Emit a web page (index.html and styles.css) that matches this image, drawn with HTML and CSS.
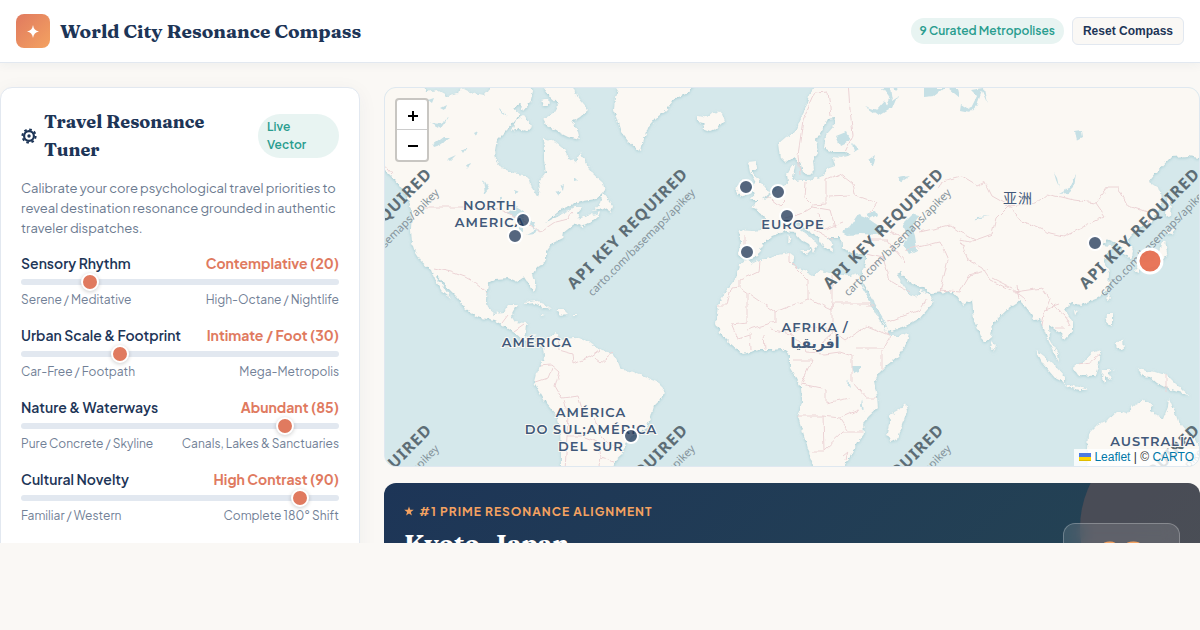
FILE: index.html
```html
<!DOCTYPE html>
<html lang="en">
<head>
<meta charset="utf-8">
<title>World City Resonance Compass</title>
<link rel="stylesheet" href="styles.css">
</head>
<body>
<div class="app">
  <header class="topbar">
    <div class="brand">
      <span class="logo"><svg viewBox="0 0 34 34" aria-hidden="true"><path d="M17 11Q17.8 16.700 23 17.500Q17.800 18.300 17 24Q16.200 18.300 11 17.500Q16.200 16.700 17 11Z" fill="#fff"/></svg></span>
      <h1 class="brand-name">World City Resonance Compass</h1>
    </div>
    <div class="actions">
      <span class="pill">9 Curated Metropolises</span>
      <button class="reset" type="button">Reset Compass</button>
    </div>
  </header>

  <main class="layout">
    <section class="tuner">
      <div class="tuner-head">
        <h2 class="tuner-title">
          <svg class="gear" viewBox="0 0 16 16" aria-hidden="true"><circle cx="8" cy="8" r="4.900" fill="none" stroke="#1d3557" stroke-width="2.200"/><circle cx="8" cy="8" r="1.700" fill="#1d3557"/><circle cx="8" cy="8" r="6.600" fill="none" stroke="#1d3557" stroke-width="2" stroke-dasharray="2.600 2.584"/></svg>
          <span>Travel Resonance Tuner</span>
        </h2>
        <span class="pill pill-narrow">Live Vector</span>
      </div>
      <p class="intro">Calibrate your core psychological travel priorities to reveal destination resonance grounded in authentic traveler dispatches.</p>
      <div class="dials">
        <div class="dial">
          <div class="dial-top"><label for="rhythm">Sensory Rhythm</label><output for="rhythm">Contemplative (20)</output></div>
          <input id="rhythm" type="range" min="0" max="100" value="20">
          <div class="dial-ends"><span>Serene / Meditative</span><span>High-Octane / Nightlife</span></div>
        </div>
        <div class="dial">
          <div class="dial-top"><label for="scale">Urban Scale &amp; Footprint</label><output for="scale">Intimate / Foot (30)</output></div>
          <input id="scale" type="range" min="0" max="100" value="30">
          <div class="dial-ends"><span>Car-Free / Footpath</span><span>Mega-Metropolis</span></div>
        </div>
        <div class="dial">
          <div class="dial-top"><label for="nature">Nature &amp; Waterways</label><output for="nature">Abundant (85)</output></div>
          <input id="nature" type="range" min="0" max="100" value="85">
          <div class="dial-ends"><span>Pure Concrete / Skyline</span><span>Canals, Lakes &amp; Sanctuaries</span></div>
        </div>
        <div class="dial">
          <div class="dial-top"><label for="novelty">Cultural Novelty</label><output for="novelty">High Contrast (90)</output></div>
          <input id="novelty" type="range" min="0" max="100" value="90">
          <div class="dial-ends"><span>Familiar / Western</span><span>Complete 180° Shift</span></div>
        </div>
      </div>
    </section>

    <div class="results">
      <section class="map" aria-label="World map">
        <svg class="world" viewBox="385 88 814 378" preserveAspectRatio="xMidYMid slice">
          <defs>
            <filter id="coast" x="380" y="80" width="830" height="400" filterUnits="userSpaceOnUse">
              <feTurbulence type="fractalNoise" baseFrequency="0.22" numOctaves="2" seed="4" result="n"/>
              <feDisplacementMap in="SourceGraphic" in2="n" scale="5" xChannelSelector="R" yChannelSelector="G" result="d"/>
              <feDropShadow in="d" dx="0" dy="1" stdDeviation="1.500" flood-color="#9fc8cf" flood-opacity=".8"/>
            </filter>
            <filter id="wobble" x="380" y="80" width="830" height="400" filterUnits="userSpaceOnUse">
              <feTurbulence type="fractalNoise" baseFrequency="0.12" numOctaves="2" seed="9" result="n"/>
              <feDisplacementMap in="SourceGraphic" in2="n" scale="5" xChannelSelector="R" yChannelSelector="G"/>
            </filter>
          </defs>
          <rect x="380" y="80" width="830" height="400" fill="#d5e8eb"/>
          <g class="land" filter="url(#coast)">
            <!-- North America -->
            <path d="M375 80H422L426 92L437 90L448 96L458 94L462 88L470 92L484 95L490 88L492 80H530L533 92L530 103L523 111L520 104L513 108L520 113L515 121L507 130L497 140L495 150L496 160L502 168L513 173L524 175L530 181L532 188L538 198L540 190L539 182L546 173L544 160L544 150L543 138L556 142L566 150L567 157L576 163L580 152L586 164L593 174L603 183L605 192L596 199L583 201L574 204L563 208L552 217L545 223L556 217L566 212L575 207L582 207L577 213L579 219L590 214L599 216L590 223L582 227L576 224L572 226L563 233L562 238L552 243L546 251L546 261L537 267L532 275L536 287L534 293L530 286L524 277L517 282L508 278L495 279L488 283L486 298L488 308L495 314L503 313L508 305L517 305L511 316L515 322L526 323L525 335L532 342L541 341L548 338L545 346L537 344L526 342L516 334L503 325L495 321L477 317L465 308L458 298L448 288L438 276L436 277L444 288L451 299L443 293L435 280L431 270L421 261L415 252L412 243L411 230L412 208L405 194L395 180L375 160Z"/>
            <path d="M544 88L555 82L572 84L578 98L588 110L580 117L572 122L578 132L580 140L568 137L558 132L546 125L543 119L553 113L558 104L551 98ZM541 100L548 98L549 106L543 106ZM516 120L524 116L532 127L526 131L519 129L512 131ZM603 193L613 206L611 213L603 208L593 211L600 203ZM588 217L600 212L596 220L588 222Z"/>
            <path d="M495 80H518L516 90L505 92L498 90Z"/>
            <!-- Greenland and Iceland -->
            <path d="M622 80L615 97L614 110L617 120L621 132L628 141L636 148L641 151L643 142L648 128L656 118L666 110L674 99L688 93L697 80ZM698 115L707 117L713 112L722 113L725 121L719 127L710 131L702 128L706 124L698 122Z"/>
            <!-- Caribbean -->
            <path d="M525 302L534 300L543 304L551 309L542 307L534 303L526 304ZM557 310L564 310L568 314L560 315ZM542 314L546 315L542 316ZM573 314L577 314L577 316L573 316Z"/>
            <!-- South America -->
            <path d="M546 339L556 333L561 339L574 338L588 341L594 346L602 351L613 353L618 362L621 370L630 371L645 377L659 383L664 388L663 397L654 406L650 420L646 428L638 433L630 437L625 445L622 455L615 461L614 475H561L561 450L560 430L556 415L546 403L539 391L534 382L536 374L540 366L545 356L544 347Z"/>
            <!-- Africa -->
            <path d="M746 260L753 263L772 256L790 253L794 256L793 266L806 272L813 276L820 271L836 274L850 276L858 274L862 282L867 296L873 309L880 321L886 330L891 336L899 336L909 333L906 345L898 356L886 366L879 373L874 382L877 397L878 408L869 416L863 423L864 434L856 445L850 457L843 466L836 475H817L811 460L807 445L803 432L798 417L802 403L801 388L796 378L790 368L790 355L782 349L771 350L759 350L743 354L731 344L721 334L716 324L718 305L726 291L736 278L740 265Z"/>
            <path d="M905 403L907 411L902 425L898 439L891 442L887 434L890 421L889 416L898 411Z"/>
            <!-- Eurasia -->
            <path d="M818 80L809 95L806 108L800 120L796 132L786 137L779 143L781 158L786 163L794 157L800 162L803 173L809 175L814 170L813 161L818 153L816 140L822 130L828 119L835 118L834 126L826 135L824 148L832 152L845 152L851 155L841 158L833 157L835 166L827 169L823 176L809 180L800 180L795 181L793 178L795 165L792 165L787 174L788 183L779 188L771 193L768 198L759 200L752 207L758 210L765 218L762 230L752 231L738 230L741 240L738 256L749 259L757 256L764 243L772 236L777 234L786 231L794 232L800 239L809 244L813 252L818 243L808 236L797 228L794 222L799 222L806 230L818 237L824 247L833 252L832 244L828 237L841 237L842 247L853 255L866 253L866 264L862 271L863 282L874 302L881 318L887 332L902 328L920 318L933 303L930 295L921 290L917 297L909 294L900 281L897 274L901 272L912 285L923 287L930 293L953 292L963 305L972 299L974 320L984 343L991 337L993 323L1008 309L1020 301L1027 308L1035 320L1040 318L1047 337L1053 351L1059 362L1058 354L1050 341L1049 325L1061 334L1065 340L1073 331L1073 321L1064 309L1072 303L1081 305L1098 298L1108 290L1109 273L1104 259L1112 246L1102 245L1107 239L1117 243L1125 253L1131 261L1133 252L1128 239L1140 227L1152 222L1162 203L1161 190L1149 182L1155 174L1171 157L1188 156L1210 160V80H946V85L934 80ZM736 280"/>
            <path d="M748 162L756 161L757 168L752 172L759 181L765 187L769 194L762 200L750 200L756 193L750 190L756 183L750 172ZM737 186L744 179L751 183L751 193L741 196L736 192ZM789 233L791 244L788 244ZM800 250L811 250L807 254Z"/>
            <path d="M992 341L996 345L995 350L991 348ZM1036 350L1044 356L1055 366L1065 377L1065 383L1055 378L1043 364ZM1065 384L1078 387L1089 390L1080 390L1067 387ZM1075 364L1083 364L1092 353L1101 350L1100 359L1095 376L1078 375L1074 369ZM1103 370L1115 370L1108 372L1112 381L1106 376L1106 384L1102 378ZM1138 369L1146 371L1156 372L1168 376L1176 384L1189 395L1178 392L1168 389L1157 383L1150 377L1143 376ZM1107 314L1112 314L1112 326L1106 323ZM1115 344L1123 339L1124 350L1116 348ZM1108 294L1110 298L1107 302ZM1074 310L1078 311L1075 314Z"/>
            <path d="M1165 240L1167 253L1160 265L1150 268L1140 267L1137 273L1135 270L1142 262L1153 260L1159 252L1162 242ZM1163 232L1176 229L1172 234ZM1168 190L1171 200L1170 218L1166 215Z"/>
            <!-- Australia -->
            <path d="M1088 475L1087 450L1088 434L1097 425L1108 420L1118 411L1126 414L1133 406L1144 400L1152 404L1151 411L1163 419L1168 407L1169 398L1174 410L1178 421L1187 432L1196 441L1204 453V475Z"/>
          </g>
          <!-- Enclosed seas and lakes -->
          <g class="lake" filter="url(#wobble)">
            <path d="M850 226L858 214L866 217L873 222L885 230L880 235L861 234L848 235L843 232ZM867 213L875 211L877 215L870 219ZM904 222L912 214L919 216L912 226L915 236L917 250L909 254L904 245L908 238ZM858 280L861 283L873 302L885 321L888 330L882 320L870 301Z"/>
            <path d="M507 214L517 207L527 213L521 218L513 216ZM519 220L523 218L523 231L519 230ZM528 220L536 222L533 230ZM527 235L538 229L535 234ZM432 145L443 137L450 137L439 145L433 147ZM430 122L441 123L448 118L441 128ZM483 180L489 190L485 195ZM1059 194L1068 189L1076 175L1074 187L1068 193ZM852 366L860 366L860 372L854 374ZM848 378L850 389L847 386ZM862 398L864 412L861 406ZM973 222L977 217L989 216L977 219ZM961 104L970 110L977 96L971 90L984 88L987 103L982 91L977 105L970 113L960 111ZM888 80H905L896 90ZM836 136L846 132L850 140L840 145ZM868 160L875 155L872 166ZM852 142L859 149L854 152ZM898 178L910 176L901 182Z"/>
            <path d="M882 88L890 87L892 100L898 96L893 108L886 108L890 99ZM865 106L877 110L885 101L888 109L878 115ZM924 88L944 88L934 96L924 97ZM948 88L958 88L960 98Z"/>
            <path d="M428 100L434 98L432 103ZM440 108L446 105L444 110ZM447 159L456 155L450 161ZM462 150L468 147L464 153ZM466 165L471 163L468 169ZM474 133L478 131L476 136ZM420 145L425 150L421 151ZM499 108L508 116L500 111ZM560 186L564 184L563 190ZM556 192L561 190L558 196ZM574 176L578 180L574 181ZM500 196L503 198L500 200ZM514 190L520 192L515 194ZM1075 132L1082 131L1083 137L1077 140ZM1054 173L1057 178L1059 187L1056 180Z"/>
          </g>
          <g class="border" filter="url(#wobble)">
            <path d="M424 207H470L500 210L518 218L540 232L555 222L567 219L572 213M385 165L392 174M433 268L451 272L465 277L476 283L487 292M502 323L508 315M514 331L524 324M558 336L559 350L573 354L574 364L590 357L600 350M594 358L600 363L613 352M540 366L551 365L559 372L555 386L562 398L578 396L583 412L594 418L600 434L607 443L620 449M536 382L548 378L552 368M564 400L568 416L567 436L565 470M567 436L582 436L594 430M582 436L598 442L601 458L614 462M601 458L598 470"/>
            <path d="M716 305H727L731 288L740 287V280L759 271L760 262M739 287L775 312L808 299V280L789 261V253M747 294V322L731 324M775 312V322L747 330M808 299L832 310V275M832 310V303H870M832 310V334L820 345M732 324L738 338L750 334M750 334L751 350M764 334L765 350M771 329L790 334L807 326L832 330M790 334L800 342L806 353L825 354L840 352L852 356M832 330L846 340L866 326M866 326L891 336L884 348L856 348M852 356L852 382L866 398L878 398M882 370V350M793 360H812L802 383M801 384L826 389V403L850 398M798 416H823L824 450L843 432L863 432M823 416L840 418L858 410M812 452H824M840 418L848 430M843 456L848 452L846 460M866 306L874 306M887 322L920 310L928 298"/>
            <path d="M800 175L798 155L803 120L815 93L828 92L831 116M848 80L850 110L853 135L845 152M805 199L806 182M806 199L812 205L826 204L826 180M767 196L780 206L786 200M786 218L800 214L812 207L830 210L835 228M826 180L840 174L853 184L855 195L877 203L870 213M829 196L850 195M820 214L823 230L843 222M815 230L833 240M745 235V248M867 240L888 240L895 250L905 262M866 253L883 257L890 280L910 292M867 270L884 258M890 232L902 238M920 232L950 225L957 230L975 240M905 250L940 242L948 260L940 292M938 190L942 182L962 177L977 186L985 182L992 196L1008 205L1020 220L1050 233L1063 236L1082 227L1105 216L1096 203L1074 200L1047 194L1036 203L1008 206L996 218L992 234L970 242L960 240L968 260L982 268L990 280L1015 292L1042 288L1050 300L1044 315M1096 203L1108 187L1118 187L1128 206L1148 212L1150 225M940 290L960 292L970 275L988 270M992 278L1012 288L1026 300M1019 300L1017 285M1060 305L1045 310L1042 325M1051 304L1065 316L1070 326M1055 328L1065 328M1078 364L1090 362L1100 354M1166 374V392"/>
          </g>
          <g class="mark">
            <g transform="translate(374 231) rotate(-45)"><text class="mark-big" y="2">API KEY REQUIRED</text><text class="mark-small" y="20">carto.com/basemaps/apikey</text></g>
            <g transform="translate(630 231) rotate(-45)"><text class="mark-big" y="2">API KEY REQUIRED</text><text class="mark-small" y="20">carto.com/basemaps/apikey</text></g>
            <g transform="translate(886 231) rotate(-45)"><text class="mark-big" y="2">API KEY REQUIRED</text><text class="mark-small" y="20">carto.com/basemaps/apikey</text></g>
            <g transform="translate(1142 231) rotate(-45)"><text class="mark-big" y="2">API KEY REQUIRED</text><text class="mark-small" y="20">carto.com/basemaps/apikey</text></g>
            <g transform="translate(374 487) rotate(-45)"><text class="mark-big" y="2">API KEY REQUIRED</text><text class="mark-small" y="20">carto.com/basemaps/apikey</text></g>
            <g transform="translate(630 487) rotate(-45)"><text class="mark-big" y="2">API KEY REQUIRED</text><text class="mark-small" y="20">carto.com/basemaps/apikey</text></g>
            <g transform="translate(886 487) rotate(-45)"><text class="mark-big" y="2">API KEY REQUIRED</text><text class="mark-small" y="20">carto.com/basemaps/apikey</text></g>
            <g transform="translate(1142 487) rotate(-45)"><text class="mark-big" y="2">API KEY REQUIRED</text><text class="mark-small" y="20">carto.com/basemaps/apikey</text></g>
          </g>
          <g class="place">
            <text x="490" y="210">NORTH</text><text x="490" y="227">AMERICA</text>
            <text x="537" y="347">AMÉRICA</text>
            <text x="591" y="417">AMÉRICA</text><text x="591" y="434">DO SUL;AMÉRICA</text><text x="591" y="451">DEL SUR</text>
            <text x="793" y="229">EUROPE</text>
            <text x="815" y="332">AFRIKA /</text><text class="arabic" x="815" y="348">أفريقيا</text>
            <text class="cjk" x="1018" y="203">亚洲</text>
            <text x="1153" y="446">AUSTRALIA</text>
          </g>
          <g class="pin">
            <circle cx="523" cy="220" r="7"/><circle cx="515" cy="236" r="7"/><circle cx="631" cy="436" r="7"/>
            <circle cx="746" cy="187" r="7"/><circle cx="778" cy="192" r="7"/><circle cx="787" cy="216" r="7"/>
            <circle cx="747" cy="252" r="7"/><circle cx="1095" cy="243" r="7"/>
            <circle class="pin-top" cx="1150" cy="261" r="12"/>
          </g>
        </svg>
        <div class="zoom">
          <button type="button" aria-label="Zoom in"><svg viewBox="0 0 12 12"><path d="M1 6H11M6 1V11"/></svg></button>
          <button type="button" aria-label="Zoom out"><svg viewBox="0 0 12 12"><path d="M1 6H11"/></svg></button>
        </div>
        <div class="credit"><a href="#leaflet"><svg class="flag" viewBox="0 0 12 8" aria-hidden="true"><path fill="#4c7be1" d="M0 0h12v4H0z"/><path fill="#ffd500" d="M0 4h12v3H0z"/><path fill="#e0bc00" d="M0 7h12v1H0z"/></svg> Leaflet</a> | © <a href="#carto">CARTO</a></div>
      </section>

      <section class="match">
        <div class="match-text">
          <div class="match-tag"><svg class="star" viewBox="0 0 10 10" aria-hidden="true"><path fill="#f4a261" d="M5 0.500L6.200 3.800H9.800L6.900 6L7.900 9.500L5 7.400L2.100 9.500L3.100 6L0.200 3.800H3.800Z"/></svg>#1 PRIME RESONANCE ALIGNMENT</div>
          <h2 class="match-city">Kyoto, Japan</h2>
        </div>
        <div class="score">98</div>
      </section>
    </div>
  </main>
</div>
</body>
</html>
```
FILE: styles.css
```css
* { box-sizing: border-box; }

body {
  margin: 0;
  background: #faf8f5;
  color: #1d3557;
  font-family: "Plus Jakarta Sans", Inter, sans-serif;
}

h1, h2, p { margin: 0; }

.app {
  height: calc(100vh - 87px);
  overflow: hidden;
}

.topbar {
  display: flex;
  align-items: center;
  justify-content: space-between;
  padding: 14px 16px;
  background: #fff;
  border-bottom: 1px solid #e2e8f0;
  box-shadow: 0 2px 10px rgba(29, 53, 87, .05);
}

.brand, .actions { display: flex; align-items: center; }
.brand { gap: 10px; }
.actions { gap: 8px; }

.logo {
  width: 34px;
  height: 34px;
  border-radius: 8px;
  background: linear-gradient(135deg, #e07a5f, #f4a261);
}
.logo svg { display: block; }

.brand-name {
  font-family: Fraunces, "Noto Serif", "Liberation Serif", serif;
  font-size: 19px;
  line-height: 28px;
  font-weight: 700;
}

.pill {
  padding: 4px 9px;
  border-radius: 22px;
  background: #e8f4f2;
  color: #2a9d8f;
  font-size: 12px;
  line-height: 18px;
  font-weight: 600;
}
.pill-narrow { flex: 0 0 81px; }

.reset {
  height: 28px;
  padding: 0 10px;
  border: 1px solid #e2e8f0;
  border-radius: 6px;
  background: #faf8f5;
  color: #1d3557;
  font: 700 12px "Liberation Sans", sans-serif;
}

.layout {
  display: grid;
  grid-template-columns: 360px minmax(0, 1fr);
  gap: 24px;
  padding-top: 24px;
}

.tuner {
  padding: 20px;
  border: 1px solid #e2e8f0;
  border-radius: 12px;
  background: #fff;
  box-shadow: 0 4px 20px rgba(29, 53, 87, .05);
}

.tuner-head {
  display: flex;
  align-items: center;
  justify-content: space-between;
  gap: 16px;
}

.tuner-title {
  display: flex;
  align-items: center;
  gap: 7px;
  font-family: Fraunces, "Noto Serif", "Liberation Serif", serif;
  font-size: 18px;
  line-height: 28px;
}
.gear { flex: none; width: 16px; height: 16px; }

.intro {
  margin: 14px 0 15px;
  color: #6b7a90;
  font-size: 13px;
  line-height: 20px;
}

.dials { display: grid; gap: 16px; }
.dial-top, .dial-ends { display: flex; justify-content: space-between; }
.dial-top { font-size: 14px; line-height: 20px; font-weight: 600; }
.dial-top output { color: #e07a5f; font-weight: 700; }
.dial-ends { color: #718096; font-size: 12px; line-height: 18px; }

.dial input {
  display: block;
  width: 100%;
  height: 18px;
  margin: 0;
  background: none;
  appearance: none;
}
.dial input::-webkit-slider-runnable-track {
  height: 6px;
  border-radius: 3px;
  background: #e2e8f0;
}
.dial input::-webkit-slider-thumb {
  width: 18px;
  height: 18px;
  margin-top: -6px;
  border: 2px solid #fff;
  border-radius: 50%;
  background: #e07a5f;
  box-shadow: 0 1px 4px rgba(0, 0, 0, .2);
  appearance: none;
}

.results { display: grid; gap: 16px; align-content: start; }

.map {
  position: relative;
  height: 380px;
  overflow: hidden;
  border: 1px solid #dfe8f0;
  border-radius: 12px;
  background: #d5e8eb;
}
.world { display: block; width: 100%; height: 100%; }
.land { fill: #fbf8f3; }
.lake { fill: #c6e0e5; }
.border { fill: none; stroke: #ecd3d5; stroke-width: 1; }

.mark { fill: #5d6d76; text-anchor: middle; font-family: "Noto Sans", sans-serif; }
.mark-big { font-size: 16px; font-weight: 700; letter-spacing: 1px; }
.mark-small { font-size: 11px; fill: #84939b; }

.place {
  fill: #41597a;
  stroke: #fbf8f3;
  stroke-width: 2px;
  paint-order: stroke;
  text-anchor: middle;
  font-family: Montserrat, Lato, sans-serif;
  font-size: 13px;
  font-weight: 600;
  letter-spacing: 1px;
}
.arabic { font-family: "DejaVu Sans", sans-serif; font-size: 14px; font-weight: 700; letter-spacing: 0; }
.cjk { font-family: "Noto Sans CJK SC", sans-serif; font-size: 14px; font-weight: 400; }

.pin { fill: #1d3557; fill-opacity: .75; stroke: #fff; stroke-width: 2; }
.pin-top { fill: #e76f51; fill-opacity: .95; stroke-width: 3; }

.zoom {
  position: absolute;
  top: 10px;
  left: 10px;
  border: 2px solid rgba(0, 0, 0, .2);
  border-radius: 4px;
  background: #fff;
  background-clip: padding-box;
}
.zoom button {
  display: grid;
  place-items: center;
  width: 30px;
  height: 30px;
  padding: 2px 0 0 1px;
  border: 0;
  background: none;
}
.zoom button:first-child { border-bottom: 1px solid #ccc; }
.zoom svg { width: 12px; height: 12px; stroke: #000; stroke-width: 2; }

.credit {
  position: absolute;
  right: 0;
  bottom: 0;
  padding: 0 5px;
  background: rgba(255, 255, 255, .8);
  color: #333;
  font: 12px/17px "Liberation Sans", sans-serif;
}
.credit a { color: #0078a8; text-decoration: none; }
.flag { width: 12px; height: 8px; }

.match {
  position: relative;
  display: flex;
  justify-content: space-between;
  min-height: 200px;
  padding: 20px;
  overflow: hidden;
  border-radius: 12px;
  background: linear-gradient(135deg, #1d3557, #264653);
  color: #fff;
}
.match::before {
  content: "";
  position: absolute;
  top: -55px;
  right: -80px;
  width: 200px;
  height: 200px;
  border-radius: 50%;
  background: rgba(224, 122, 95, .2);
}
.match-tag {
  color: #f4a261;
  font-size: 12px;
  line-height: 18px;
  font-weight: 700;
  letter-spacing: 1px;
}
.star { width: 10px; height: 10px; margin-right: 5px; }
.match-city {
  margin-top: 2px;
  font-family: Fraunces, "Noto Serif", "Liberation Serif", serif;
  font-size: 25px;
  line-height: 40px;
}
.score {
  position: relative;
  width: 117px;
  height: 110px;
  margin-top: 20px;
  padding-top: 6px;
  border: 1px solid rgba(255, 255, 255, .25);
  border-radius: 12px;
  background: rgba(255, 255, 255, .12);
  backdrop-filter: blur(8px);
  color: #f4a261;
  text-align: center;
  font-family: Fraunces, "Noto Serif", "Liberation Serif", serif;
  font-size: 35px;
  line-height: 48px;
  font-weight: 700;
}
```
